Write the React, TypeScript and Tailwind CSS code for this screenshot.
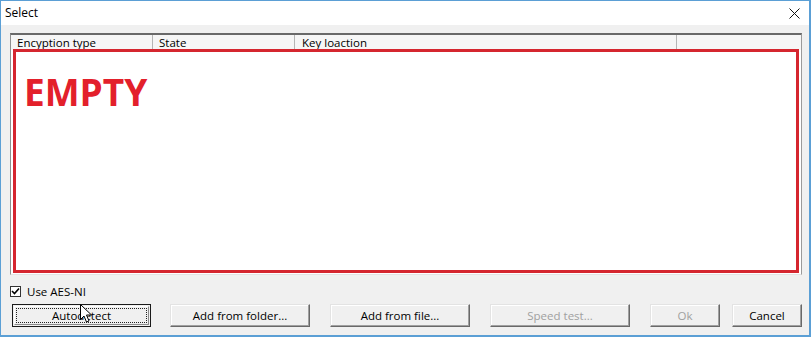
const ui = { fontFamily: '"Open Sans", "Liberation Sans", sans-serif' };

function Btn({
  label,
  w,
  disabled,
  focused,
}: {
  label: string;
  w: string;
  disabled?: boolean;
  focused?: boolean;
}) {
  if (focused) {
    return (
      <div className={`${w} h-[23px] border border-[#1a1a1a] bg-[#f0f0f0] p-[1px]`}>
        <div className="h-full border border-t-white border-l-white border-r-[#8a8a8a] border-b-[#8a8a8a] p-[1px]">
          <div className="flex h-full items-center justify-center border border-dotted border-[#222] text-[11.5px] text-black">
            {label}
          </div>
        </div>
      </div>
    );
  }
  return (
    <div
      className={`${w} flex h-[23px] items-center justify-center border border-t-[#e3e3e3] border-l-[#e3e3e3] border-r-[#696969] border-b-[#696969] bg-[#f0f0f0] shadow-[inset_-1px_-1px_0_#a0a0a0,inset_1px_1px_0_#ffffff] text-[11.5px] ${
        disabled ? 'text-[#a0a0a0]' : 'text-black'
      }`}
    >
      {label}
    </div>
  );
}

function Cursor() {
  return (
    <svg width="13" height="20" viewBox="0 0 13 20" className="absolute left-[79px] top-[303px]">
      <path
        d="M0.5 0.5 L0.5 15.5 L4 12 L6.5 18 L9 17 L6.5 11 L11.5 11 Z"
        fill="#ffffff"
        stroke="#000000"
        strokeWidth="1"
        strokeLinejoin="round"
      />
    </svg>
  );
}

export default function App() {
  return (
    <div
      style={ui}
      className="relative flex h-[337px] w-[811px] flex-col border-t border-l border-r-2 border-b-2 border-[#5b9fd5] bg-[#f0f0f0]"
    >
      <div className="flex h-[24px] items-center justify-between bg-white pl-[4px] pr-[9px]">
        <span className="text-[12px] text-black">Select</span>
        <svg width="11" height="11" viewBox="0 0 11 11">
          <path d="M0.5 0.5 L10.5 10.5 M10.5 0.5 L0.5 10.5" stroke="#111" strokeWidth="1" />
        </svg>
      </div>

      <div className="flex flex-1 flex-col pl-[9px] pr-[7px] pt-[8px]">
        <div className="flex h-[242px] flex-col border border-t-2 border-[#a0a0a0] border-t-[#696969] border-l-[#8f8f8f] border-r-[#9a9a9a] border-b-[#e3e3e3] bg-white">
          <div className="flex h-[15px] shrink-0 items-center bg-[#f6f6f6] text-[11.5px] text-black">
            <div className="w-[142px] border-r border-[#b5b5b5] pl-[6px] leading-[15px]">Encyption type</div>
            <div className="w-[142px] border-r border-[#b5b5b5] pl-[6px] leading-[15px]">State</div>
            <div className="w-[382px] border-r border-[#b5b5b5] pl-[7px] leading-[15px]">Key loaction</div>
            <div className="flex-1" />
          </div>
          <div className="mx-[2px] mb-[1px] -mt-[1px] flex-1 border-[3px] border-[#d5262f] pl-[8px] pt-[21px]">
            <div className="text-[37px] font-bold leading-none text-[#e3202b]">EMPTY</div>
          </div>
        </div>

        <div className="mt-[10px] flex items-center gap-[6px]">
          <div className="flex h-[11px] w-[11px] items-center justify-center border border-[#333] bg-white">
            <svg width="9" height="9" viewBox="0 0 9 9">
              <path d="M1 4 L3.5 6.5 L8 1.5" fill="none" stroke="#000" strokeWidth="1.6" />
            </svg>
          </div>
          <span className="text-[11.5px] leading-[13px] text-black">Use AES-NI</span>
        </div>

        <div className="mt-[6px] flex pl-[2px]">
          <Btn label="Autodetect" w="w-[139px]" focused />
          <div className="w-[19px]" />
          <Btn label="Add from folder..." w="w-[140px]" />
          <div className="w-[20px]" />
          <Btn label="Add from file..." w="w-[140px]" />
          <div className="w-[20px]" />
          <Btn label="Speed test..." w="w-[140px]" disabled />
          <div className="w-[20px]" />
          <Btn label="Ok" w="w-[70px]" disabled />
          <div className="w-[12px]" />
          <Btn label="Cancel" w="w-[70px]" />
        </div>
      </div>
      <Cursor />
    </div>
  );
}
